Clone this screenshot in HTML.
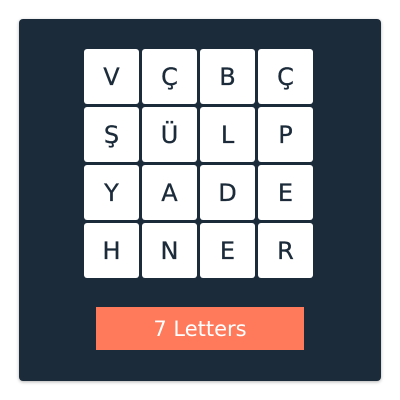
<!DOCTYPE html>
<html><head><style>
body{margin:0;width:400px;height:400px;background:#fff;position:relative;overflow:hidden}
.p{position:absolute;left:19px;top:19px;width:362px;height:362px;background:#1c2b3a;border-radius:4px;box-shadow:0 1px 3px rgba(0,0,0,.3)}
.t{position:absolute;width:55px;height:55px;background:#fff;border-radius:3px;display:flex;align-items:center;justify-content:center;font:24px "DejaVu Sans","Liberation Sans",sans-serif;color:#1c2b3a;-webkit-text-stroke:0.3px #1c2b3a}
.b{position:absolute;left:96px;top:307px;width:208px;height:43px;background:#fe7a5b;color:#fff;font:21px "DejaVu Sans","Liberation Sans",sans-serif;display:flex;align-items:center;justify-content:center}
</style></head><body>
<div class="p"></div>
<div class="t" style="left:84px;top:49px">V</div>
<div class="t" style="left:142px;top:49px">Ç</div>
<div class="t" style="left:200px;top:49px">B</div>
<div class="t" style="left:258px;top:49px">Ç</div>
<div class="t" style="left:84px;top:107px">Ş</div>
<div class="t" style="left:142px;top:107px">Ü</div>
<div class="t" style="left:200px;top:107px">L</div>
<div class="t" style="left:258px;top:107px">P</div>
<div class="t" style="left:84px;top:165px">Y</div>
<div class="t" style="left:142px;top:165px">A</div>
<div class="t" style="left:200px;top:165px">D</div>
<div class="t" style="left:258px;top:165px">E</div>
<div class="t" style="left:84px;top:223px">H</div>
<div class="t" style="left:142px;top:223px">N</div>
<div class="t" style="left:200px;top:223px">E</div>
<div class="t" style="left:258px;top:223px">R</div>
<div class="b">7 Letters</div>
</body></html>
